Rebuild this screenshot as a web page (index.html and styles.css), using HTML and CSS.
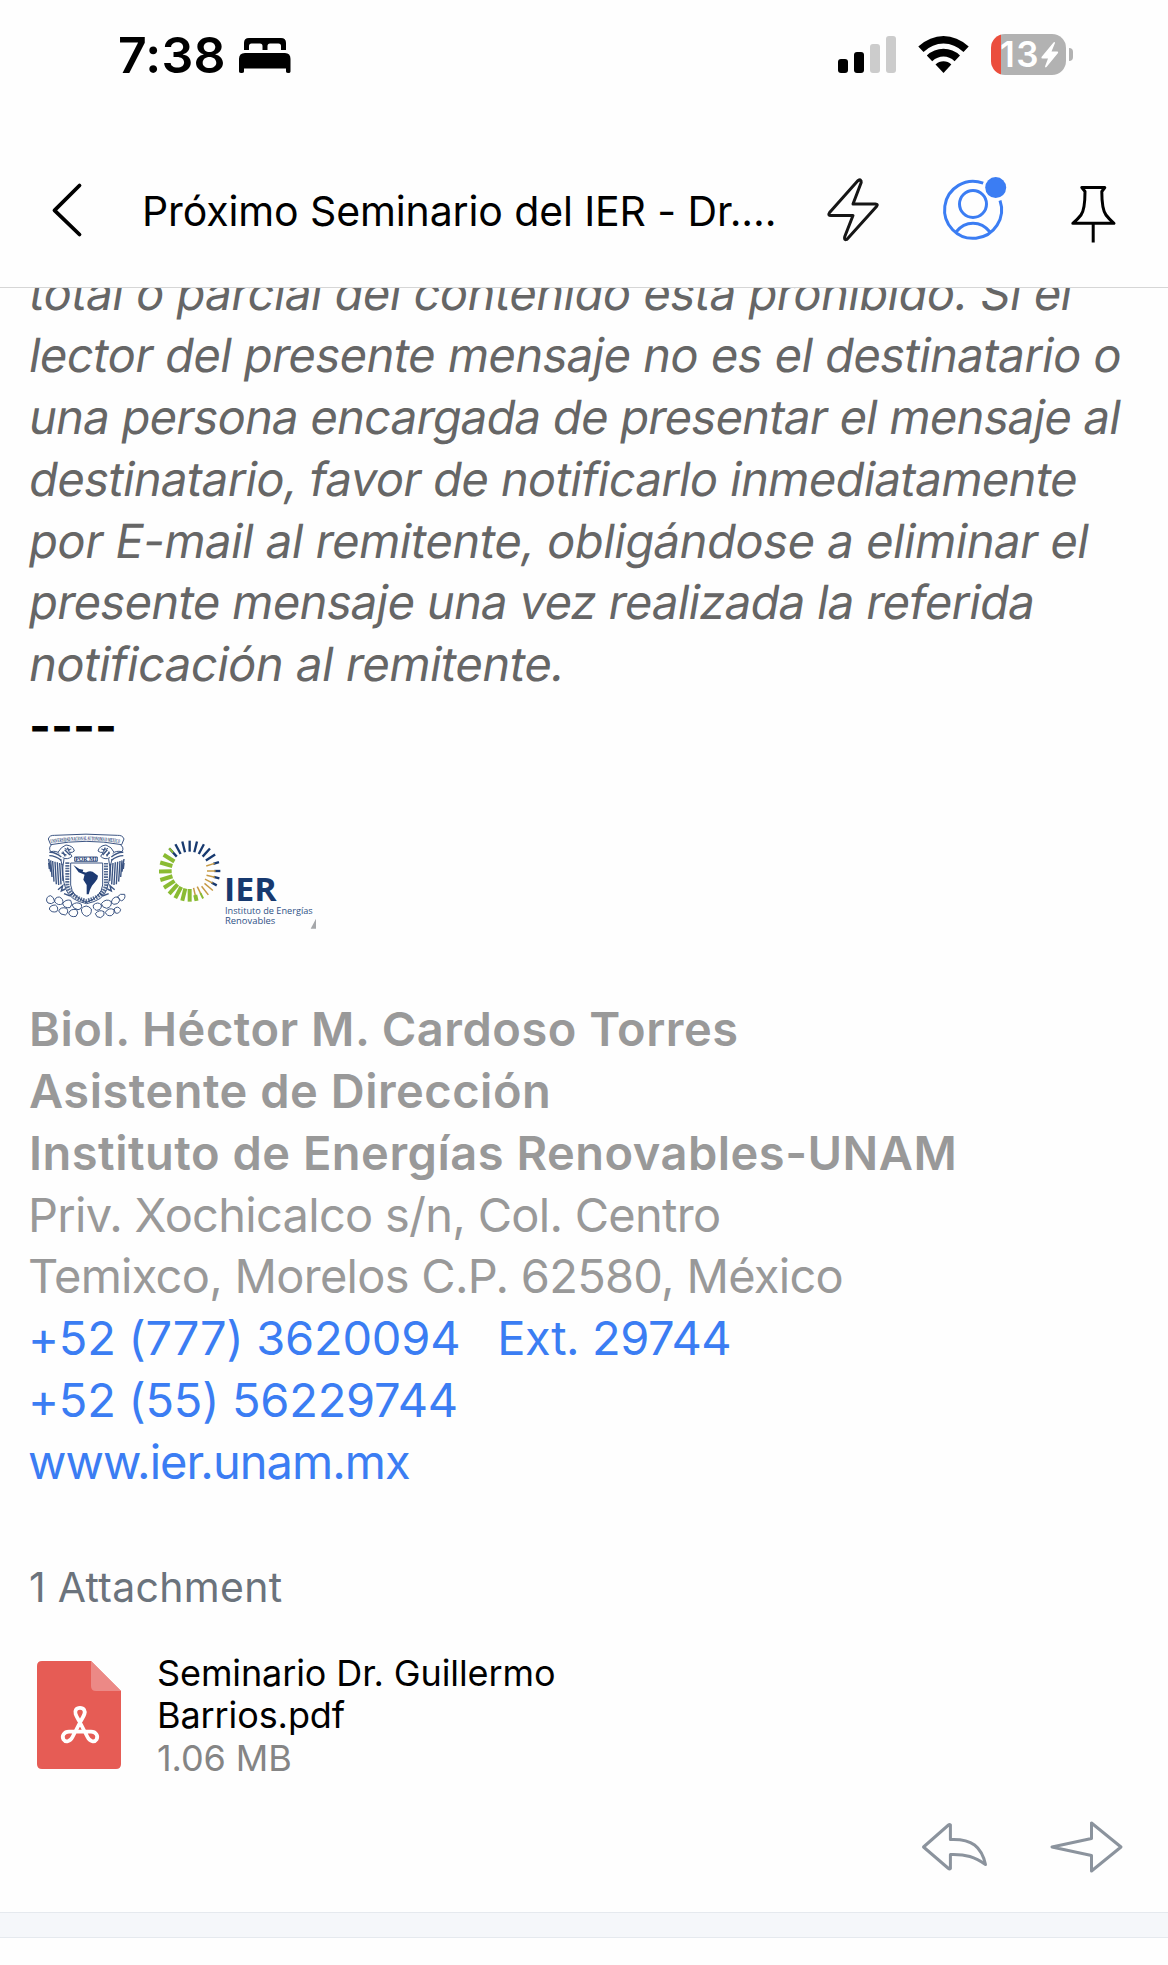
FILE: index.html
```html
<!DOCTYPE html>
<html lang="es">
<head>
<meta charset="utf-8">
<title>Próximo Seminario del IER</title>
<link rel="stylesheet" href="styles.css">
</head>
<body>
<div class="status">
  <span class="time">7:38</span>
  <svg class="bed" width="52" height="41" viewBox="239 34 52 41" aria-hidden="true">
    <path d="M244 50V43Q244 38 249 38H281Q286 38 286 43V50H281V46Q281 43.500 278.500 43.500H270Q267.500 43.500 267.500 46V50H262.500V46Q262.500 43.500 260 43.500H251.500Q249 43.500 249 46V50Z"/>
    <path d="M239 71.500V59Q239 53 245 53H285Q290.500 53 290.500 59V71.500Q290.500 73 288.500 73Q286 73 286 71.500V68.500H244V71.500Q244 73 241.500 73Q239 73 239 71.500Z"/>
  </svg>
  <svg class="signal" width="58" height="41" viewBox="838 34 58 41" aria-hidden="true">
    <rect x="838" y="59" width="10" height="14" rx="3"/>
    <rect x="854" y="52" width="10" height="21" rx="3"/>
    <rect class="off" x="870" y="44" width="10" height="29" rx="3"/>
    <rect class="off" x="886" y="36" width="10" height="37" rx="3"/>
  </svg>
  <svg class="wifi" width="51" height="41" viewBox="918 34 51 41" aria-hidden="true">
    <path d="M918.300 46.500Q930 36 943.500 36T968.700 46.500L963.500 52Q954.500 43.500 943.500 43.500T923.500 52Z"/>
    <path d="M926.800 55.500Q934 48.800 943.500 48.800T960 55.500L954.600 61.200Q949.500 56.600 943.500 56.600T932.200 61.200Z"/>
    <path d="M935.500 64.500Q939 61.200 943.500 61.200T951.300 64.500L943.500 73Z"/>
  </svg>
  <div class="battery">
    <span class="level">13</span>
    <svg width="17" height="27" viewBox="1041 41.500 17 27" aria-hidden="true"><path d="M1053.500 43L1041.500 57.500Q1041 59 1042.500 59H1048L1045 67Q1045.500 68.500 1046.500 67.500L1058 53.500Q1058.500 52 1057.500 52H1051.500L1055 43.500Q1055 42 1053.500 43Z"/></svg>
  </div>
  <div class="nub"></div>
</div>

<header class="bar">
  <svg class="back" width="34" height="66" viewBox="50 178 34 66" aria-hidden="true"><path d="M79.500 185.500L54.500 210.300L79.500 234.500"/></svg>
  <h1 class="subject">Próximo Seminario del IER - Dr....</h1>
  <svg class="bolt" width="54" height="66" viewBox="826 178 54 66" aria-hidden="true"><path d="M857.800 180.800L829.600 212.500Q827.600 215.500 831 215.500H853L844.800 236.500Q843.600 240.500 846.800 239.400L876.500 206.500Q878.500 204 875.400 204H853L861.200 182.500Q861.500 178.300 857.800 180.800Z"/></svg>
  <svg class="person" width="68" height="66" viewBox="941 178 68 66" aria-hidden="true">
    <path d="M983.200 183.200A28.500 28.500 0 1 0 1000 200.500"/>
    <circle cx="973" cy="204" r="13.500"/>
    <path d="M956 232Q963 223.300 973 223.300T990 232"/>
    <circle class="dot" cx="995.700" cy="187.600" r="10.500"/>
  </svg>
  <svg class="pin" width="49" height="66" viewBox="1069 178 49 66" aria-hidden="true"><path d="M1081.800 187.500H1104.800L1101.800 191.500C1101.800 205 1103 211 1106 215Q1109 219 1114 223.300H1072.800Q1078 219 1081 215C1084 211 1085 205 1085 191.500ZM1093.200 223V242.500"/></svg>
</header>

<main class="message">
  <p class="notice">
    <span class="l1">total o parcial del contenido está prohibido. Si el</span>
    <span class="l2">lector del presente mensaje no es el destinatario o</span>
    <span class="l3">una persona encargada de presentar el mensaje al</span>
    <span class="l4">destinatario, favor de notificarlo inmediatamente</span>
    <span class="l5">por E-mail al remitente, obligándose a eliminar el</span>
    <span class="l6">presente mensaje una vez realizada la referida</span>
    <span class="l7">notificación al remitente.</span>
  </p>
  <p class="rule">----</p>

  <div class="logos">
    <svg class="crest" width="80" height="88" viewBox="48 34 240 264" aria-label="UNAM">
      <defs><path id="ribbon" d="M62 65Q168 47 274 65"/></defs>
      <g class="line">
        <path d="M55 52Q58 40 74 41Q168 34 262 41Q278 40 282 52L275 69Q168 49 62 69Z"/>
        <path d="M66 68Q54 78 62 90Q80 86 88 96M270 68Q284 78 276 90Q256 86 248 96"/>
        <path d="M84 92Q92 76 108 70Q130 72 133 88Q128 94 118 92L126 104Q112 116 98 108M252 92Q246 76 228 70Q208 72 204 88Q210 94 220 92L212 104Q224 116 240 108"/>
        <path d="M122 124H218V190Q214 226 170 242Q126 226 122 190Z"/>
        <path d="M134 106H202V119H134Z"/>
        <path d="M102 112Q92 160 108 204Q120 236 170 246Q220 236 230 204Q246 160 236 112"/>
        <path d="M50 238Q48 224 62 222Q72 226 74 240Q64 250 54 244ZM74 240Q74 226 88 226Q102 232 98 246Q84 254 74 240ZM98 246Q106 232 122 236Q130 248 120 258Q102 260 98 246ZM58 262Q60 250 76 250Q88 258 80 270Q64 274 58 262ZM86 268Q92 254 110 260Q118 272 106 280Q90 280 86 268ZM116 274Q122 260 140 264Q148 274 138 284Q120 288 116 274ZM126 250Q140 238 154 248Q158 262 144 264Q130 262 126 250ZM154 262Q168 244 184 262Q186 280 170 284Q154 280 154 262ZM190 250Q204 238 214 250Q216 264 200 266Q188 262 190 250ZM214 246Q228 228 244 240Q246 256 230 260Q216 258 214 246ZM244 242Q248 224 264 226Q274 236 262 246Q250 252 244 242ZM262 226Q270 214 284 218Q288 232 274 238ZM196 276Q208 262 222 270Q226 282 212 288Q198 288 196 276ZM226 272Q236 256 252 264Q256 276 244 282Q230 284 226 272ZM252 262Q264 250 272 264Q268 278 256 274Z"/>
        <path d="M92 112L96 130M246 112L242 130M116 84L124 82M222 84L214 82M94 94L110 100M240 94L228 100M104 80L112 84M234 80L226 84"/>
      </g>
      <g class="feather">
        <path d="M58 92Q74 90 94 106M58 102Q76 102 94 116M56 112L62 150M62 116L66 166M68 118L72 180M75 120L79 188M82 122L86 190M89 124L93 188M96 126L99 178M56 124L58 142"/>
        <path d="M280 92Q264 90 244 106M280 102Q262 102 244 116M282 112L276 150M276 116L272 166M270 118L266 180M263 120L259 188M256 122L252 190M249 124L245 188M242 126L239 178M282 124L280 142"/>
        <path d="M84 204L98 192L94 208L106 202M254 204L240 192L244 208L232 202M102 216L118 222L130 214M236 216L220 222L208 214M104 84L120 100M112 78L118 90M98 90L106 104M232 84L218 100M226 78L220 90M238 90L230 104"/>
      </g>
      <path class="motto" d="M112 122V190Q118 224 168 238Q222 224 228 190V122"/>
      <path class="land" d="M130 130L148 142L160 144L158 150L172 154L166 160L146 152Z"/>
      <path class="land" d="M164 158Q172 146 188 150L204 162Q204 172 196 180L186 192L180 204L176 218L170 218L170 190L160 174Z"/>
      <text class="banner"><textPath href="#ribbon" textLength="208" lengthAdjust="spacingAndGlyphs">UNIVERSIDAD NACIONAL AUTONOMA D MEXICO</textPath></text>
      <text class="por" x="136" y="118" textLength="64" lengthAdjust="spacingAndGlyphs">POR MI</text>
    </svg>
    <svg class="ier" width="162" height="90" viewBox="24 28 486 270" aria-label="IER">
      <defs>
        <path id="ray" d="M0 -91V-58"/>
        <path id="leaf" d="M0 -92V-54"/>
        <path id="tip" d="M0 -92V-74"/>
        <path id="core" d="M0 -78V-52"/>
      </defs>
      <g transform="translate(119 121)">
        <g class="navy">
          <use href="#ray" transform="rotate(-42)"/><use href="#ray" transform="rotate(-28)"/><use href="#ray" transform="rotate(-14)"/><use href="#ray"/><use href="#ray" transform="rotate(14)"/><use href="#ray" transform="rotate(28)"/><use href="#ray" transform="rotate(42)"/>
          <use href="#ray" transform="rotate(57)"/><use href="#tip" transform="rotate(73)"/><use href="#tip" transform="rotate(90)"/><use href="#tip" transform="rotate(104)"/><use href="#tip" transform="rotate(118)"/>
        </g>
        <g class="gold">
          <use href="#core" transform="rotate(73)"/><use href="#core" transform="rotate(90)"/><use href="#core" transform="rotate(104)"/><use href="#core" transform="rotate(118)"/><use href="#ray" transform="rotate(130)"/><use href="#ray" transform="rotate(142)"/><use href="#core" transform="rotate(154)"/><use href="#core" transform="rotate(167)"/>
        </g>
        <g class="green">
          <g class="thin"><use href="#tip" transform="rotate(154)"/><use href="#tip" transform="rotate(-42)"/></g>
          <use href="#tip" transform="rotate(167)"/><use href="#leaf" transform="rotate(180)"/><use href="#leaf" transform="rotate(194)"/><use href="#leaf" transform="rotate(208)"/><use href="#leaf" transform="rotate(222)"/><use href="#leaf" transform="rotate(237)"/><use href="#leaf" transform="rotate(253)"/><use href="#leaf" transform="rotate(269)"/><use href="#leaf" transform="rotate(286)"/><use href="#leaf" transform="rotate(302)"/>
        </g>
      </g>
      <text class="mark" x="222" y="210" textLength="158" lengthAdjust="spacingAndGlyphs">IER</text>
      <text class="sub" x="225" y="249" textLength="263" lengthAdjust="spacingAndGlyphs">Instituto de Energías</text>
      <text class="sub" x="225" y="279" textLength="151" lengthAdjust="spacingAndGlyphs">Renovables</text>
      <path class="corner" d="M498 264V294H482Z"/>
    </svg>
  </div>

  <address class="signature">
    <strong>Biol. Héctor M. Cardoso Torres</strong>
    <strong>Asistente de Dirección</strong>
    <strong>Instituto de Energías Renovables-UNAM</strong>
    <span>Priv. Xochicalco s/n, Col. Centro</span>
    <span>Temixco, Morelos C.P. 62580, México</span>
    <div class="phones"><a>+52 (777) 3620094</a><a class="ext">Ext. 29744</a></div>
    <a>+52 (55) 56229744</a>
    <a class="web">www.ier.unam.mx</a>
  </address>

  <h2 class="count">1 Attachment</h2>
  <div class="file">
    <svg width="84" height="108" viewBox="37 1661 84 108" aria-hidden="true">
      <path class="sheet" d="M42 1661H91L121 1691V1764Q121 1769 116 1769H42Q37 1769 37 1764V1666Q37 1661 42 1661Z"/>
      <path class="fold" d="M91 1661L121 1691H96Q91 1691 91 1686Z"/>
      <path class="acro" d="M80 1707.800C76 1707.800 74.600 1711 75.600 1714C77 1718 79 1720 80.500 1723.500L87.500 1737C90 1742 94.500 1742.500 96.500 1739.500C98.500 1736 96 1731.700 91 1731.700H69C64 1731.700 61.500 1736 63.500 1739.500C65.500 1742.500 70 1742 72.500 1737L79.500 1723.500C81 1720 83 1718 84.400 1714C85.400 1711 84 1707.800 80 1707.800Z"/>
    </svg>
    <div class="info">
      <span class="name">Seminario Dr. Guillermo<br>Barrios.pdf</span>
      <span class="size">1.06 MB</span>
    </div>
  </div>

  <div class="actions">
    <svg width="68" height="54" viewBox="920 1820 68 54" aria-hidden="true"><path d="M950.400 1825V1839.500C972 1838.500 981.500 1847 985.500 1864.500C975 1857 966 1854 950.400 1854.500V1868.500Q949.500 1869.500 948.500 1868.500L923.500 1847L948.500 1825Q949.500 1824.300 950.400 1825Z"/></svg>
    <svg width="74" height="54" viewBox="1050 1820 74 54" aria-hidden="true"><path d="M1091.500 1823V1838.500L1052 1847L1091.500 1855.500V1871L1121 1847Z"/></svg>
  </div>
</main>
<div class="divider"></div>
</body>
</html>
```
FILE: styles.css
```css
* { box-sizing: border-box; }
body { margin: 0; width: 1168px; height: 1965px; overflow: hidden; background: #fefefe; color: #000; font-family: Inter, "Liberation Sans", sans-serif; }
svg { display: block; flex: none; overflow: visible; }

.status { display: flex; align-items: center; height: 109px; padding-left: 118px; }
.time { width: 121px; font-size: 50px; font-weight: 600; letter-spacing: .2px; white-space: nowrap; }
.signal { margin-left: 547px; }
.signal .off { fill: #ccc; }
.wifi { margin-left: 22px; }
.battery { display: flex; align-items: center; gap: 2px; width: 75px; height: 41px; margin-left: 22px; padding-left: 9px; border-radius: 14px; background: linear-gradient(90deg, #eb4e3d 10px, #b2b2b2 10px); color: #fff; }
.battery svg { fill: #fff; }
.level { width: 39px; font-size: 35px; font-weight: 600; letter-spacing: 1.5px; line-height: 41px; }
.nub { width: 4px; height: 13px; margin-left: 3px; border-radius: 0 4px 4px 0; background: #b2b2b2; }

.bar { display: flex; align-items: center; height: 179px; padding: 26px 0 0 50px; border-bottom: 1px solid #d6d6d6; }
.bar svg { fill: none; stroke: #000; stroke-width: 3; stroke-linecap: round; stroke-linejoin: round; }
.bar .back { stroke-width: 3.800; }
.subject { width: 649px; margin: 0 0 0 58px; font-size: 41px; font-weight: 400; letter-spacing: -.12px; white-space: nowrap; }
.bar .bolt { margin-left: 35px; stroke: #161616; }
.bar .person { margin-left: 61px; stroke: #3b7df3; stroke-linecap: butt; }
.bar .dot { fill: #3b7df3; stroke: none; }
.bar .pin { margin-left: 60px; stroke-linecap: butt; }

.message { height: 1624px; padding-left: 28px; overflow: hidden; }
.notice { display: flex; flex-direction: column; margin: -25.700px 0 0 -1.500px; color: #666; font-size: 47px; line-height: 61.800px; white-space: nowrap; }
.notice span { transform: skewX(-9.500deg); transform-origin: 0 48px; }
.l1 { letter-spacing: -.46px; }
.l2 { letter-spacing: -.52px; }
.l3 { letter-spacing: -.68px; }
.l4 { letter-spacing: -.58px; }
.l5 { letter-spacing: -.41px; }
.l6 { letter-spacing: -.61px; }
.l7 { letter-spacing: -.43px; }
.rule { margin: 0; padding-left: 1px; font-size: 47px; font-weight: 700; line-height: 61.800px; }

.logos { display: flex; align-items: flex-start; gap: 32px; height: 241.300px; padding: 76.200px 0 0 18px; }
.crest .line { fill: none; stroke: #3c5583; stroke-width: 3; }
.crest .feather { fill: none; stroke: #3c5583; stroke-width: 4.200; }
.crest .motto { fill: none; stroke: #2b4677; stroke-width: 12; stroke-dasharray: 5 3; opacity: .8; }
.crest .land { fill: #1d3a72; }
.crest text { fill: #1d3a72; font-family: "Liberation Serif", serif; font-size: 17px; font-weight: 700; }
.ier { margin-top: 7px; }
.navy { stroke: #17396f; stroke-width: 7; }
.gold { stroke: #c69a45; stroke-width: 4.500; }
.green { stroke: #8abb33; stroke-width: 12; }
.green .thin { stroke-width: 6; }
.mark { fill: #17396f; font-family: "Open Sans", sans-serif; font-size: 94px; font-weight: 700; }
.sub { fill: #2f5286; font-family: "Open Sans", sans-serif; font-size: 27px; font-weight: 500; }
.corner { fill: #a5a7aa; }

.signature { display: flex; flex-direction: column; color: #999; font-size: 47px; font-style: normal; line-height: 61.860px; letter-spacing: -.72px; white-space: nowrap; }
.signature strong { padding-left: 1px; font-weight: 600; letter-spacing: .5px; }
.signature a { color: #3b7df3; letter-spacing: -.24px; }
.signature .ext { letter-spacing: -.45px; }
.signature .web { letter-spacing: -.95px; }
.phones { display: flex; gap: 37px; }

.count { height: 50px; margin: 69px 0 0; padding-left: 1px; color: #6b737c; font-size: 41px; font-weight: 400; line-height: 50px; letter-spacing: .3px; }
.file { display: flex; gap: 36px; margin-top: 39.700px; padding-left: 9px; }
.file svg { margin-top: 9.300px; }
.sheet { fill: #e65c55; }
.fold { fill: #ec8986; }
.acro { fill: none; stroke: #fff; stroke-width: 3.800; stroke-linecap: round; stroke-linejoin: round; }
.info { display: flex; flex-direction: column; height: 127.200px; font-size: 36px; line-height: 42.400px; letter-spacing: -.1px; white-space: nowrap; }
.size { margin-top: .800px; color: #858585; }

.actions { display: flex; justify-content: flex-end; gap: 62px; margin-top: 41px; padding-right: 44px; }
.actions svg { fill: none; stroke: #8b939d; stroke-width: 3; stroke-linejoin: round; }
.divider { height: 26px; border: solid #e5e9ee; border-width: 1px 0; background: #f5f7fa; }
```
